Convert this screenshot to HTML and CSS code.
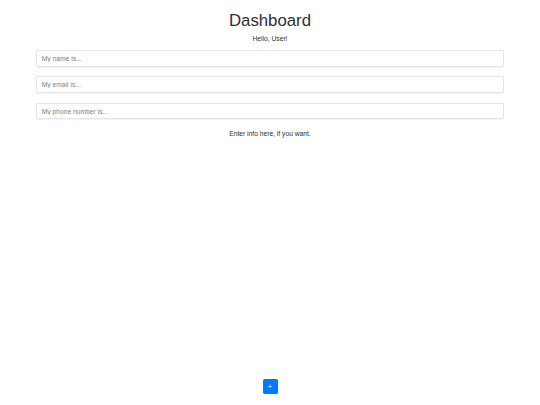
FILE: index.html
```html
<!DOCTYPE html>
<html lang="en">
<head>
<meta charset="utf-8">
<title>Dashboard</title>
<link rel="stylesheet" href="styles.css">
</head>
<body>
<div class="page">
  <main class="container">
    <h1 class="title">Dashboard</h1>
    <p class="greeting">Hello, User!</p>
    <form class="form">
      <input class="field" type="text" placeholder="My name is...">
      <input class="field" type="email" placeholder="My email is...">
      <input class="field" type="tel" placeholder="My phone number is...">
    </form>
    <p class="note">Enter info here, if you want.</p>
  </main>
  <footer class="footer">
    <button class="add-btn" type="button">+</button>
  </footer>
</div>
</body>
</html>
```

FILE: styles.css
```css
* { box-sizing: border-box; }
html, body { margin: 0; padding: 0; background: #fff; }
body {
  font-family: "Liberation Sans", Arial, sans-serif;
  color: #2b2f33;
  font-size: 6.7px;
  line-height: 1.5;
}
.page {
  min-height: 100vh;
  display: flex;
  flex-direction: column;
}
.container {
  width: 468px;
  margin: 0 auto;
  display: flex;
  flex-direction: column;
  align-items: stretch;
}
.title {
  margin: 11px 0 2.8px;
  font-size: 16.8px;
  font-weight: 400;
  line-height: 1.2;
  text-align: center;
}
.greeting {
  margin: 0 0 6px;
  text-align: center;
}
.form {
  display: flex;
  flex-direction: column;
  gap: 9.8px;
}
.field {
  display: block;
  width: 100%;
  height: 16.6px;
  padding: 0 4.8px;
  font-family: inherit;
  font-size: 6.7px;
  color: #495057;
  background: #fff;
  border: 0.6px solid #e3e5e8;
  border-radius: 1.6px;
  box-shadow: 0 0.5px 1.2px rgba(0,0,0,0.06);
  outline: none;
}
.field::placeholder { color: #7a828a; }
.note {
  margin: 9.6px 0 0;
  text-align: center;
}
.footer {
  margin-top: auto;
  display: flex;
  justify-content: center;
  padding-bottom: 11px;
}
.add-btn {
  width: 15px;
  height: 15px;
  padding: 0;
  border: none;
  border-radius: 1.7px;
  background: #007bff;
  color: #fff;
  font-family: inherit;
  font-size: 6.7px;
  line-height: 15px;
  text-align: center;
  cursor: pointer;
}
```
